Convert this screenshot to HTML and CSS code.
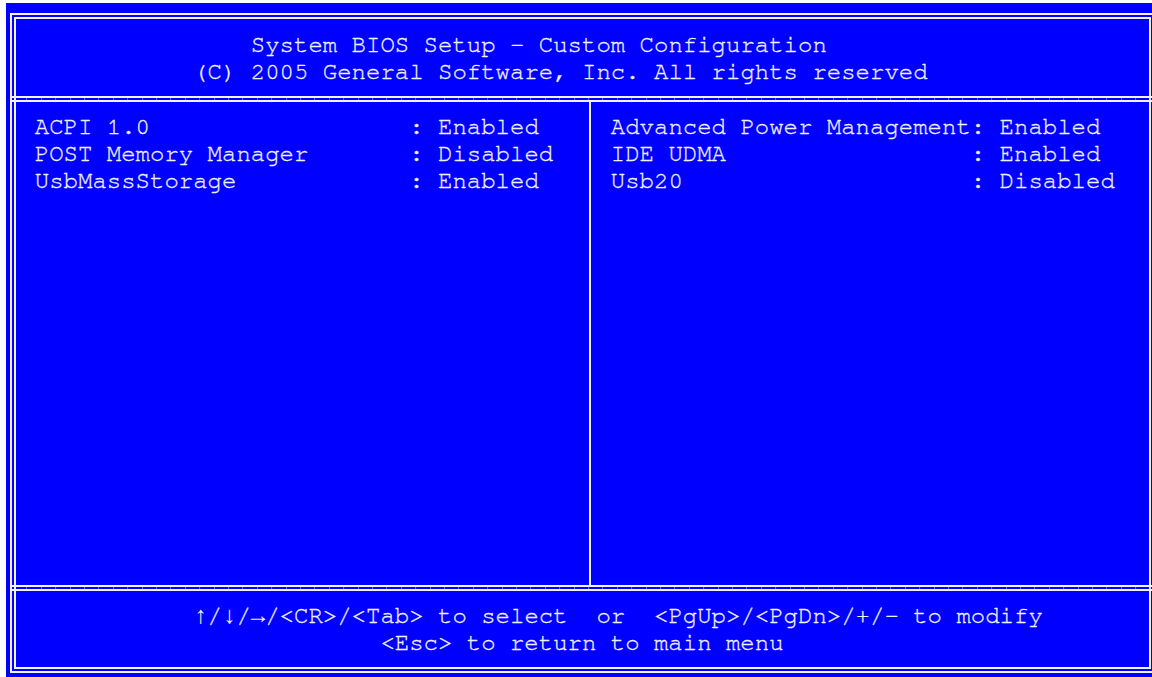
FILE: index.html
```html
<!DOCTYPE html>
<html lang="en">
<head>
<meta charset="utf-8">
<title>System BIOS Setup - Custom Configuration</title>
<link rel="stylesheet" href="styles.css">
</head>
<body>
<div class="screen">
  <div class="frame">
    <header class="banner">
      <div class="line title">System BIOS Setup - Custom Configuration</div>
      <div class="line copyright">(C) 2005 General Software, Inc. All rights reserved</div>
    </header>
    <div class="rule"></div>
    <main class="options">
      <section class="column left">
        <div class="opt"><span>ACPI 1.0</span><span>: Enabled</span></div>
        <div class="opt"><span>POST Memory Manager</span><span>: Disabled</span></div>
        <div class="opt"><span>UsbMassStorage</span><span>: Enabled</span></div>
      </section>
      <section class="column right">
        <div class="opt"><span>Advanced Power Management</span><span>: Enabled</span></div>
        <div class="opt"><span>IDE UDMA</span><span>: Enabled</span></div>
        <div class="opt"><span>Usb20</span><span>: Disabled</span></div>
      </section>
    </main>
    <div class="rule"></div>
    <footer class="help">
      <div class="line keys"><span class="arrow">↑</span>/<span class="arrow">↓</span>/<span class="arrow">→</span>/&lt;CR&gt;/&lt;Tab&gt; to select  or  &lt;PgUp&gt;/&lt;PgDn&gt;/+/- to modify</div>
      <div class="line esc">&lt;Esc&gt; to return to main menu</div>
    </footer>
  </div>
</div>
</body>
</html>
```

FILE: styles.css
```css
html, body {
  margin: 0;
  padding: 0;
  background: #ffffff;
  overflow: hidden;
}

/* 80x25 text screen: 14.4px cells, 27.2px rows */
.screen {
  box-sizing: border-box;
  width: 1152px;
  height: 674px;
  margin: 3px 0 0 6px;
  padding: 10px 0 0 3.5px;
  background: #0000ff;
  color: #f0f0fa;
  font-family: "Nimbus Mono PS", "Nimbus Mono L", "FreeMono", "Liberation Mono", monospace;
  font-size: 24px;
  line-height: 27.2px;
  -webkit-text-stroke: 0.3px #f0f0fa;
}

.frame {
  box-sizing: border-box;
  width: 1145px;
  height: 660px;
  border: 6px double #f2f2ff;
  display: flex;
  flex-direction: column;
}

.line {
  white-space: pre;
}

.banner {
  height: 77px;
  box-sizing: border-box;
  padding: 13px 0 0 4.9px;
}

.title { padding-left: 16ch; }
.copyright { padding-left: 12ch; }

/* double horizontal rule joining the outer frame */
.rule {
  height: 2px;
  margin: 0 -4px;
  border-top: 2px solid #f2f2ff;
  border-bottom: 2px solid #f2f2ff;
  background: repeating-linear-gradient(90deg,
    transparent 0 13.4px,
    rgba(190, 190, 255, 0.55) 13.4px 14.4px);
  background-position: 1.1px 0;
}

.options {
  flex: 1;
  display: flex;
}

.column {
  box-sizing: border-box;
  padding-top: 11.6px;
}

.left {
  width: 573.5px;
  padding-left: 19.3px;
}

.right {
  flex: 1;
  border-left: 2px solid #f2f2ff;
  padding-left: 19.8px;
}

.opt {
  display: grid;
  white-space: pre;
}

.left .opt { grid-template-columns: 26ch auto; }
.right .opt { grid-template-columns: 25ch auto; }

.help {
  height: 76px;
  box-sizing: border-box;
  padding: 12.2px 0 0 4.9px;
}

.keys { padding-left: 12ch; }
.esc { padding-left: 25ch; }

/* cursor-key arrows use the taller sans glyphs, same 0.6em cell */
.arrow {
  font-family: "Liberation Mono", monospace;
  -webkit-text-stroke: 0;
  font-weight: normal;
}
```
